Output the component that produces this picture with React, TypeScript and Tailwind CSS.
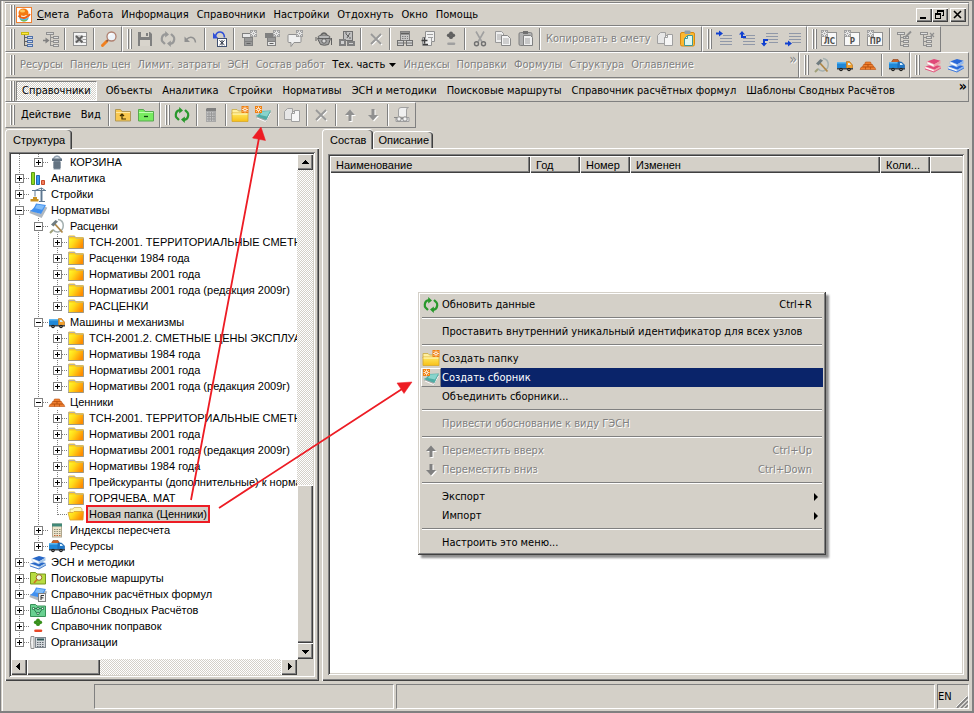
import React from "react";

type Kids = { children?: React.ReactNode };

const RAISED =
  "bg-[#d4d0c8] shadow-[inset_1px_1px_#ffffff,inset_-1px_-1px_#404040,inset_-2px_-2px_#808080]";
const SUNKEN =
  "p-0.5 shadow-[inset_1px_1px_#808080,inset_-1px_-1px_#ffffff,inset_2px_2px_#404040,inset_-2px_-2px_#d4d0c8]";
const DITHER =
  "bg-[conic-gradient(#ffffff_25%,#d4d0c8_0_50%,#ffffff_0_75%,#d4d0c8_0)] bg-[length:2px_2px]";
const DISABLED = "text-[#808080] [text-shadow:1px_1px_#ffffff]";
const CLASSIC = "font-['Liberation_Sans',sans-serif]";

/* ---------- icons ---------- */

function Svg({ children }: Kids) {
  return (
    <svg width="16" height="16" viewBox="0 0 16 16" fill="none" className="block shrink-0 overflow-visible" aria-hidden="true">
      {children}
    </svg>
  );
}

function Spark({ x, y, color = "#f08010" }: { x: number; y: number; color?: string }) {
  return (
    <g transform={`translate(${x} ${y})`}>
      <rect width="7" height="7" fill={color} />
      <path d="M3.5 .5v6M.5 3.5h6M1.3 1.3l4.4 4.4M5.7 1.3L1.3 5.7" stroke="#fff" strokeWidth=".8" />
      <circle cx="3.5" cy="3.5" r="1.2" fill={color} stroke="#fff" strokeWidth=".7" />
    </g>
  );
}

const Logo = () => (
  <Svg>
    <rect x=".5" y=".5" width="15" height="15" fill="#fff" stroke="#f08030" />
    <path d="M3 10q5 3 10 0q-1 4.500-5 4.500T3 10z" fill="#58b8e0" />
    <path d="M4 12q4 2.500 8 0q-1.500 2.500-4 2.500T4 12z" fill="#80c040" />
    <ellipse cx="7.500" cy="6" rx="5" ry="4.500" fill="#f47a10" />
    <ellipse cx="6.500" cy="4" rx="2.600" ry="1.600" fill="#ffc860" />
    <path d="M2.500 8.500c3 3.500 8 3.500 11.500-1.500" stroke="#f06010" strokeWidth="2" />
    <path d="M5 9q3 1.200 5.500-.5" stroke="#fff" />
  </Svg>
);

const TreeYellow = () => (
  <Svg>
    <g shapeRendering="crispEdges">
      <path d="M4.500 4v11M4.500 6.500h3M4.500 10.500h3M4.500 14.500h3" stroke="#606060" />
      <rect x="1.500" y="1.500" width="7" height="2" fill="#ffe840" stroke="#c8b810" />
      <rect x="7.500" y="5.500" width="5" height="2" fill="#c8daf4" stroke="#5070a8" />
      <rect x="7.500" y="9.500" width="5" height="2" fill="#c8daf4" stroke="#5070a8" />
      <rect x="7.500" y="13.500" width="5" height="2" fill="#c8daf4" stroke="#5070a8" />
    </g>
  </Svg>
);

const TreeGray = () => (
  <Svg>
    <g shapeRendering="crispEdges" stroke="#909090">
      <path d="M7.500 4v11M7.500 6.500h3M7.500 10.500h3M7.500 14.500h3" />
      <rect x="3.500" y="1.500" width="7" height="2" fill="#d8d8d8" />
      <rect x="10.500" y="5.500" width="5" height="2" fill="#e0e0e0" />
      <rect x="10.500" y="9.500" width="5" height="2" fill="#e0e0e0" />
      <rect x="10.500" y="13.500" width="5" height="2" fill="#e0e0e0" />
    </g>
    <path d="M0 9.500h3" stroke="#808080" strokeWidth="1.500" />
    <path d="M2.500 6.500l4 3-4 3z" fill="#808080" />
  </Svg>
);

const Excel = () => (
  <Svg>
    <g shapeRendering="crispEdges">
      <rect x="1.500" y="1.500" width="13" height="13" fill="#f4f4f4" stroke="#909090" />
      <path d="M11 5.500h3M11 8.500h3M11 11.500h3" stroke="#a0a0a0" />
      <rect x="3" y="4" width="8" height="8" fill="#d0d0d0" />
    </g>
    <path d="M4 5l6.500 6.500M10.500 5L4 11.500" stroke="#606060" strokeWidth="2" />
  </Svg>
);

const Magnifier = () => (
  <Svg>
    <path d="M6 10L1.500 14.500" stroke="#f08020" strokeWidth="3" strokeLinecap="round" />
    <path d="M8 8L5.500 10.500" stroke="#805848" strokeWidth="1.500" />
    <circle cx="10.500" cy="5.500" r="4.500" fill="#eef4fa" stroke="#b08070" strokeWidth="1.300" />
    <path d="M8 5c0-1.500 1.500-2.500 3-2" stroke="#fff" strokeWidth="1.200" />
  </Svg>
);

const Save = () => (
  <Svg>
    <path d="M1 1h12l2 2v12H1z" fill="#808080" />
    <path d="M4 1h8v5H4zM3 9h10v6H3z" fill="#d8d4cc" />
    <path d="M9 2h2v3H9z" fill="#808080" />
  </Svg>
);

function Refresh({ color }: { color: string }) {
  const half = (
    <g>
      <path d="M5 13L2.500 10.500Q1.600 9.500 1.800 7.500 2.300 3.500 6 3.200" stroke={color} strokeWidth="2.200" />
      <path d="M5.200 0L9 3.400 5.200 6.500z" fill={color} />
    </g>
  );
  return (
    <Svg>
      {half}
      <g transform="rotate(180 8 8)">{half}</g>
    </Svg>
  );
}

const Undo = () => (
  <Svg>
    <path d="M3.500 8.500C7 4.500 12 6 12.500 11.500" stroke="#909090" strokeWidth="1.500" />
    <path d="M1.500 5.500v5.500H7z" fill="#909090" />
  </Svg>
);

const Recalc = () => (
  <Svg>
    <path d="M3.500 5C5-.5 12-.5 12.500 6.500" stroke="#3050d8" strokeWidth="1.600" />
    <path d="M1 1.500v6h5.500z" fill="#3050d8" />
    <rect x="5.500" y="7.500" width="9" height="8" fill="#fff" stroke="#405070" />
    <path d="M7.500 9.500l5 4.500M12.500 9.500l-5 4.500M10 9v5.500" stroke="#303848" />
  </Svg>
);

function DrawerNew({ plus }: { plus?: boolean }) {
  return (
    <Svg>
      <rect x="1.500" y="2.500" width="10" height="4" fill={plus ? "#e8e8e8" : "#808080"} stroke="#808080" />
      <rect x="3.500" y="6.500" width="8" height="4" fill="#989898" stroke="#808080" />
      <rect x="3.500" y="10.500" width="8" height="4" fill={plus ? "#989898" : "#e8e8e8"} stroke="#808080" />
      <path d="M5.500 12.500h4" stroke="#606060" />
      <Spark x={9} y={-1} color="#a0a0a0" />
    </Svg>
  );
}

const Comment = () => (
  <Svg>
    <path d="M2 3.500h11q1 0 1 1v6q0 1-1 1H7l-3 4v-4H2q-1 0-1-1v-6q0-1 1-1z" fill="#f0f0f0" stroke="#909090" />
    <Spark x={9} y={-1} color="#a0a0a0" />
  </Svg>
);

const Pot = () => (
  <Svg>
    <path d="M5 4q3-4 6 0" stroke="#606060" strokeWidth="1.500" />
    <ellipse cx="8" cy="6" rx="6" ry="2" fill="#b8b8b8" stroke="#606060" />
    <path d="M1.500 7.500h13l-2 6q-4 1.500-8 0z" fill="#a0a0a0" stroke="#606060" />
    <circle cx="8" cy="10" r="2.200" fill="#d8d8d8" stroke="#606060" />
    <path d="M15.500 7v7M0 6v4" stroke="#606060" />
  </Svg>
);

const Building = () => (
  <Svg>
    <rect x="4.500" y=".5" width="9" height="9" fill="#c0c0c0" stroke="#707070" />
    <path d="M7 3l3 3M11 2L8 7M6 2h2M10 7h2" stroke="#606060" />
    <path d="M0 8h7v7H0zM8 10h8v5H8z" fill="#808080" />
    <path d="M2 10h3v3H2zM10 12h4v1h-4z" fill="#d0d0d0" />
  </Svg>
);

const Cross = () => (
  <Svg>
    <path d="M3 3l10 10M13 3L3 13" stroke="#fff" strokeWidth="1.500" transform="translate(1 1)" />
    <path d="M3 3l10 10M13 3L3 13" stroke="#989898" strokeWidth="1.800" />
  </Svg>
);

const CalcStack = () => (
  <Svg>
    <rect x="3.500" y=".5" width="9" height="9" fill="#c8c8c8" stroke="#808080" />
    <path d="M4 2.500h8" stroke="#606060" strokeWidth="2" />
    <path d="M5 5.500h6M5 7.500h6" stroke="#808080" strokeDasharray="1.500 1" />
    <rect x=".5" y="9.500" width="6" height="5" fill="#d0d0d0" stroke="#707070" />
    <rect x="9.500" y="9.500" width="6" height="5" fill="#d0d0d0" stroke="#707070" />
    <path d="M1 12h5M10 12h5M6 12h4" stroke="#707070" />
  </Svg>
);

const DocPlus = () => (
  <Svg>
    <path d="M5.500.5h9v10h-3v4h-9v-8h3z" fill="#f0f0f0" stroke="#909090" />
    <path d="M7 3.500h6M8 6.500h5M11.500 10V6" stroke="#a0a0a0" />
    <path d="M1.500 9.500h6M4.500 6.500v6M3 13.500h5" stroke="#404040" strokeWidth="1.600" />
  </Svg>
);

function PlusMinus({ a, b }: { a: string; b: string }) {
  return (
    <Svg>
      <g fill={a}>
        <circle cx="8" cy="2.300" r="1.900" />
        <circle cx="5.800" cy="4.300" r="1.900" />
        <circle cx="10.200" cy="4.300" r="1.900" />
        <circle cx="8" cy="6.200" r="1.900" />
      </g>
      <path d="M5.500 12.800h5.500" stroke={b} strokeWidth="2.600" strokeLinecap="round" />
    </Svg>
  );
}

const Scissors = () => (
  <Svg>
    <path d="M4 .5L10 11M12 .5L6 11" stroke="#a0a0a0" strokeWidth="1.600" />
    <circle cx="4.500" cy="12.800" r="2" stroke="#707070" strokeWidth="1.400" />
    <circle cx="11.500" cy="12.800" r="2" stroke="#707070" strokeWidth="1.400" />
  </Svg>
);

const Copy = () => (
  <Svg>
    <path d="M.5.5h6l2 2v9h-8z" fill="#eee" stroke="#989898" />
    <path d="M2 4h5M2 6h5M2 8h5" stroke="#a8a8a8" />
    <path d="M6.500 4.500h6l3 3v7h-9z" fill="#f4f4f4" stroke="#888" />
    <path d="M8 8h6M8 10h6M8 12h6" stroke="#a8a8a8" />
  </Svg>
);

const CopyPlain = () => (
  <Svg>
    <path d="M.5 4.500l3-3h5v11h-8z" fill="#e6e6e6" stroke="#a0a0a0" />
    <path d="M7.500 6.500l3-3h5v11h-8z" fill="#f6f6f6" stroke="#a0a0a0" />
    <path d="M7.500 6.500h3v-3" stroke="#a0a0a0" />
  </Svg>
);

const PasteGray = () => (
  <Svg>
    <rect x="1" y="1.500" width="13" height="13" rx="1.500" fill="#b0b0b0" stroke="#808080" />
    <rect x="5" y="0" width="5" height="3" fill="#707070" />
    <path d="M5.500 4.500h7l2 2v8h-9z" fill="#eee" stroke="#808080" />
    <path d="M7 8h5M7 10h5M7 12h5" stroke="#a0a0a0" />
  </Svg>
);

const PasteColor = () => (
  <Svg>
    <rect x=".5" y="1.500" width="14" height="13.500" rx="1.500" fill="#fbb830" stroke="#d88a10" />
    <rect x="4.500" y="-.5" width="6" height="3.500" rx="1" fill="#90a0a8" />
    <path d="M4.500 7.500l3-3h5v10h-8z" fill="#e0f8f2" stroke="#409898" />
    <path d="M4.500 7.500h3v-3" stroke="#409898" />
  </Svg>
);

function Lines({ up, left }: { up?: boolean; left?: boolean }) {
  const y = up ? [4.5, 7.5, 10.5, 13.5] : [2.5, 5.5, 8.5, 11.5];
  return (
    <Svg>
      <g stroke="#9098a8" shapeRendering="crispEdges">
        {y.map((v, i) => {
          const near = up ? i === 0 : i === 3;
          return <path key={v} d={near ? `M7 ${v}h9` : `M4 ${v}h12`} />;
        })}
      </g>
      <g fill="#1040d0">
        {left && up && <path d="M0 1.500h3V-.5L7 2.500 3 5.500V3.500H0z" />}
        {!left && up && <path d="M2 7V3.500H0L3 0l3 3.500H4V5h3v2z" />}
        {!left && !up && <path d="M7 8v2H4v2h2L3 15.500 0 12h2V8z" transform="translate(-1 0)" />}
        {left && !up && <path d="M0 11.500h3v-2l4 3-4 3v-2H0z" />}
      </g>
    </Svg>
  );
}

function Lettered({ text }: { text: string }) {
  return (
    <Svg>
      <rect x=".5" y="1.500" width="15" height="13" fill="#f8f8f8" stroke="#909090" />
      <text x="8.500" y="13" fontSize="8" fontWeight="700" textAnchor="middle" fill="#505050" fontFamily="DejaVu Sans Condensed, sans-serif">
        {text}
      </text>
      <Spark x={0} y={-1} color="#a0a0a0" />
    </Svg>
  );
}

function TreeMini({ cross }: { cross?: boolean }) {
  return (
    <Svg>
      <g shapeRendering="crispEdges" stroke="#909090">
        <path d="M4.500 4v11M4.500 6.500h3M4.500 10.500h3M4.500 14.500h3" />
        <rect x="1.500" y="1.500" width="7" height="2" fill="#e0e0e0" />
        <rect x="7.500" y="5.500" width="5" height="2" fill="#e0e0e0" />
        <rect x="7.500" y="9.500" width="5" height="2" fill="#e0e0e0" />
        <rect x="7.500" y="13.500" width="5" height="2" fill="#e0e0e0" />
      </g>
      {cross ? (
        <path d="M11 2l4 4M15 2l-4 4" stroke="#909090" strokeWidth="1.200" />
      ) : (
        <path d="M9 6.500l6-6" stroke="#909090" strokeWidth="2" />
      )}
    </Svg>
  );
}

const Hammer = () => (
  <Svg>
    <path d="M9 1.500c7 1 7 11 0 12.500-2.500.3-4-1-5-2.500" stroke="#a4b0b0" strokeWidth="1.500" />
    <path d="M4 12L1 15" stroke="#a0a078" strokeWidth="2" />
    <path d="M5 5l8.500 9.500" stroke="#b08848" strokeWidth="1.800" />
    <path d="M2 6.500L6.500 2l2.500 1.500-4.500 5z" fill="#707c80" />
  </Svg>
);

function Truck({ loaded }: { loaded?: boolean }) {
  return (
    <Svg>
      {loaded && <path d="M2 6l2-3.500h5L11 6z" fill="#c86028" stroke="#904010" strokeWidth=".6" />}
      <path d="M0 5h9.500v6H0z" fill="#2088d8" />
      <path d="M0 5h9.500v1.500H0z" fill="#60b8f0" />
      {loaded ? (
        <path d="M9 5h3.500L15.500 8v4H9z" fill="#2078c8" stroke="#1858a0" strokeWidth=".6" />
      ) : (
        <path d="M9.500 4.500h3L15.500 8v4h-6z" fill="#f0a030" stroke="#b06810" strokeWidth=".6" />
      )}
      <path d="M11 6h1.500l1.500 2h-3z" fill="#d8f0ff" />
      <path d="M0 11h16v1.500H0z" fill="#404850" />
      <circle cx="4" cy="12.500" r="1.800" fill="#202020" />
      <circle cx="12" cy="12.500" r="1.800" fill="#202020" />
      <path d="M4 12.500h.01M12 12.500h.01" stroke="#ccc" strokeWidth="1.200" strokeLinecap="round" />
    </Svg>
  );
}

const Bricks = () => (
  <Svg>
    <g fill="#f08030" stroke="#b85010" strokeWidth=".6">
      <path d="M5.500 5h5l1 2.500h-7zM3.500 7.500H8v2.500H2.500zM8 7.500h4.500l1.200 2.500H8zM1.300 10h4.200v2.500H0zM5.500 10h5v2.500h-5zM10.500 10h4l1.300 2.500h-5.300z" />
    </g>
  </Svg>
);

function Books({ top, page }: { top: string; page: string }) {
  return (
    <Svg>
      <path d="M0 9.500l7-2 9 1.500-7 4z" fill={top} />
      <path d="M0 9.500l9 3.300v2.200L0 11.500z" fill="#fff" stroke={page} strokeWidth=".6" />
      <path d="M9 12.800L16 9v2l-7 4z" fill={page} />
      <path d="M0 12l9 3 7-4" stroke={top} strokeWidth=".8" />
      <path d="M2 4.500l7-2.500 6.500 1.800L9 7.500z" fill={top} />
      <path d="M2 4.500l7 3v2.500l-7-3z" fill="#fff" stroke={page} strokeWidth=".6" />
      <path d="M9 7.500l6.500-3.700V6.500L9 10z" fill={page} />
    </Svg>
  );
}

function FolderTool({ kind }: { kind: "up" | "minus" }) {
  const g = kind === "minus";
  return (
    <Svg>
      <path d="M.5 2.500h5l1.500 2h8.500v9.500H.5z" fill={g ? "#78ec60" : "#f8c850"} stroke={g ? "#58a850" : "#b09858"} />
      <path d="M1 5.500h14" stroke={g ? "#c0ffb0" : "#ffe8a0"} />
      {g ? (
        <path d="M6 9.500h4" stroke="#104010" strokeWidth="1.300" />
      ) : (
        <path d="M7 7v5h4M5 9l2-2 2 2" stroke="#403000" strokeWidth="1.200" />
      )}
    </Svg>
  );
}

const Calculator = () => (
  <Svg>
    <path d="M4 1h9v3H3V2z" fill="#808080" />
    <rect x="3.500" y="4.500" width="9" height="10" fill="#c4c4c4" stroke="#a8a8a8" />
    <path d="M4 7h8M4 9.500h8M4 12h8M6 5v9M8.500 5v9M11 5v9" stroke="#989898" />
  </Svg>
);

const FolderNew = () => (
  <Svg>
    <path d="M0 2.500h5l1.500 1.500H15v3H0z" fill="#fff0a0" stroke="#c8a840" strokeWidth=".8" />
    <path d="M0 6h16v8.500H0z" fill="url(#folderFlat)" stroke="#d8a828" strokeWidth=".8" />
    <path d="M.5 7h15" stroke="#fff6c0" strokeWidth="1.200" />
    <Spark x={9.5} y={-1} />
  </Svg>
);

const BookNew = () => (
  <Svg>
    <path d="M1 10.500l10 4.500 5-9-1.500-2z" fill="#a8a8a8" />
    <path d="M2 11l8.500 3.500L15.500 6" stroke="#fff" strokeWidth="1" />
    <path d="M6 4l10-.5-4.500 9.500L.5 9q4-1 5.500-5z" fill="#50aca4" />
    <path d="M7 4.500l8-.5-3 5.500-7-1.500z" fill="#88d4cc" />
    <Spark x={0} y={-1} />
  </Svg>
);

function Arrow({ down, color }: { down?: boolean; color: string }) {
  const d = down ? "M6.500 2h3v6h3.500L8 13.500 3 8h3.500z" : "M6.500 14h3V8h3.500L8 2.500 3 8h3.500z";
  return (
    <Svg>
      <path d={d} fill="#fff" transform="translate(1 1)" />
      <path d={d} fill={color} />
    </Svg>
  );
}

const Glasses = () => (
  <Svg>
    <path d="M4.500 9V3q0-2.500 2.500-2.500h7.500q-2 0-2 2.500v7" fill="#f0f0f0" stroke="#a0a0a0" />
    <path d="M2 14.500h13v-4H2z" fill="#e4e4e4" stroke="#a0a0a0" />
    <circle cx="5" cy="12" r="2.200" fill="#f4f4f4" stroke="#888" />
    <circle cx="11" cy="12" r="2.200" fill="#f4f4f4" stroke="#888" />
    <path d="M0 10.500h3M7 11.500h2" stroke="#888" />
  </Svg>
);

const Folder = () => (
  <Svg>
    <path d="M0 2.500L1 1.500h5.500l1 1.500H15.500v11H0z" fill="#f8c820" />
    <path d="M0 4.500h16v10H0z" fill="url(#folderFill)" />
    <path d="M.5 14V2.500h6.500l1 1.500h7.500" stroke="#b8b0a0" />
    <path d="M0 14.500h15.500v-10" stroke="#a09880" />
  </Svg>
);

const FolderOpen = () => (
  <Svg>
    <path d="M2 3h3l1-1.500h7l1 1.500v7H2z" fill="#fff8b0" stroke="#d0b860" strokeWidth=".8" />
    <path d="M0 6.500h5l1-1h9.500L15 14H2z" fill="url(#folderFill)" stroke="#d8a030" strokeWidth=".8" />
  </Svg>
);

const Bin = () => (
  <Svg>
    <path d="M4 5q4-6 8 0" fill="#d8e0e8" stroke="#90a0b0" strokeWidth="1.300" />
    <path d="M3 4.500h10V7H3z" fill="#607080" />
    <path d="M4.500 7h7v8.500h-7z" fill="#8898a8" />
    <path d="M4 9h8M4 11h8M4 13h8M6 7v8M8 7v8M10 7v8" stroke="#506070" strokeWidth=".8" />
  </Svg>
);

const Bars = () => (
  <Svg>
    <path d="M1.500 2.500h3v12h-3z" fill="#90d820" stroke="#589818" />
    <path d="M6.500 5.500h3v9h-3z" fill="#3898f0" stroke="#2068b8" />
    <path d="M11.500 10.500h3v4h-3z" fill="#f08060" stroke="#c84828" />
  </Svg>
);

const Crane = () => (
  <Svg>
    <path d="M2 4.500h14M11.500 2v13M5 4.500v6M9 15.500h6M11.500 2l4 2.500M11.500 2L5 4.500" stroke="#607890" />
    <path d="M10.500 5v10M12.500 5v10" stroke="#8098b0" strokeWidth=".6" />
    <path d="M3 11h4v2h1.500v2.500h-8V13H3z" fill="#c89020" />
  </Svg>
);

function BlueBook({ letter }: { letter?: boolean }) {
  return (
    <Svg>
      <path d="M0 9.500l11 4.500 5-9" stroke="#b0b8c0" strokeWidth="3" />
      <path d="M6 1.500L16 3l-5 9L0 9q4-2 6-7.500z" fill="#4090f0" />
      <path d="M7 2.500l7.500 1.200-2.500 4-7-1.500z" fill="#80bcf8" />
      {letter && (
        <g>
          <rect x="8.500" y="7.500" width="7" height="8" fill="#f4f4f4" stroke="#808080" />
          <path d="M11 14v-4.500h3M11 11.800h2.500" stroke="#303030" />
        </g>
      )}
    </Svg>
  );
}

const CalcColor = () => (
  <Svg>
    <rect x="3.500" y="2" width="9" height="13" fill="#ece4cc" stroke="#b0a890" />
    <path d="M3 3h10" stroke="#408878" strokeWidth="3" />
    <path d="M5 7.500h7M5 9.500h7M5 11.500h7" stroke="#909078" strokeDasharray="1.500 1" />
    <path d="M5 13.500h7" stroke="#c06030" strokeDasharray="1.500 1" />
  </Svg>
);

const FolderSearch = () => (
  <Svg>
    <path d="M.5 14V2.500h5l1.500 1.500h8.500v10z" fill="#b8dc40" stroke="#789820" />
    <circle cx="9" cy="7.500" r="2.800" fill="#f4fce0" stroke="#a06830" />
    <path d="M7 9.500L4 13" stroke="#d07020" strokeWidth="1.600" />
  </Svg>
);

const FolderScheme = () => (
  <Svg>
    <path d="M.5 14.500V2.500h5l1.500 1.500h8.500v10.500z" fill="#68d090" stroke="#389058" />
    <path d="M4 7.500l3 4M12 7.500l-3 4M4 6.500h8" stroke="#206840" strokeWidth=".8" />
    <path d="M2.500 5.500h2v2h-2zM7 5.500h2v2H7zM11.500 5.500h2v2h-2zM7 10.500h2v2H7z" fill="#e8fff0" stroke="#206840" strokeWidth=".7" />
  </Svg>
);

const Phone = () => (
  <Svg>
    <path d="M1 2.500h3v12H1q-1-6 0-12z" fill="#f0f0f0" stroke="#909090" />
    <rect x="5.500" y="3.500" width="10" height="10" fill="#d4d8dc" stroke="#808890" />
    <path d="M7 5.500h7" stroke="#305858" strokeWidth="2" />
    <path d="M7 8.500h7M7 10.500h7M7 12.500h7" stroke="#606870" strokeDasharray="1.500 1" />
  </Svg>
);

/* ---------- toolbar parts ---------- */

function Bar({ children, grow }: Kids & { grow?: boolean }) {
  return (
    <div
      className={`flex min-w-0 items-center border border-t-white border-r-[#808080] border-b-[#808080] border-l-white pr-px pl-1 ${grow ? "flex-1" : ""}`}
    >
      <div className="mr-px flex h-5 shrink-0 gap-px">
        <i className="w-0.5 border-l border-white bg-[#808080]" />
        <i className="w-0.5 border-l border-white bg-[#808080]" />
      </div>
      {children}
    </div>
  );
}

function Tool({ label, children }: Kids & { label: string }) {
  return (
    <button type="button" aria-label={label} className="flex h-[22px] w-[23px] shrink-0 items-center justify-center">
      {children}
    </button>
  );
}

const Sep = () => <i className="mx-0.5 h-[22px] w-0.5 shrink-0 border-r border-l border-r-white border-l-[#808080]" />;

function TextTool({ children, className = "px-1" }: Kids & { className?: string }) {
  return (
    <button type="button" className={`h-5 shrink-0 whitespace-nowrap ${className}`}>
      {children}
    </button>
  );
}

function ScrollButton({ d, label }: { d: string; label: string }) {
  return (
    <button type="button" aria-label={label} className={`flex size-4 shrink-0 items-center justify-center ${RAISED}`}>
      <svg width="8" height="8" viewBox="0 0 8 8" shapeRendering="crispEdges" aria-hidden="true">
        <path d={d} fill="#000" />
      </svg>
    </button>
  );
}

/* ---------- tree ---------- */

type Node = {
  label: string;
  icon: React.ReactNode;
  guides: string;
  state?: "+" | "-" | "";
  selected?: boolean;
};

/* guides: one character per column — "|" passes through, "t" branches, "l" ends the branch, "." is empty */
const folder = (label: string): Node => ({ label, icon: <Folder />, guides: "||t", state: "+" });

const NODES: Node[] = [
  { label: "КОРЗИНА", icon: <Bin />, guides: "|l", state: "+" },
  { label: "Аналитика", icon: <Bars />, guides: "t", state: "+" },
  { label: "Стройки", icon: <Crane />, guides: "t", state: "+" },
  { label: "Нормативы", icon: <BlueBook />, guides: "t", state: "-" },
  { label: "Расценки", icon: <Hammer />, guides: "|t", state: "-" },
  folder("ТСН-2001. ТЕРРИТОРИАЛЬНЫЕ СМЕТН"),
  folder("Расценки 1984 года"),
  folder("Нормативы 2001 года"),
  folder("Нормативы 2001 года (редакция 2009г)"),
  { ...folder("РАСЦЕНКИ"), guides: "||l" },
  { label: "Машины и механизмы", icon: <Truck />, guides: "|t", state: "-" },
  folder("ТСН-2001.2. СМЕТНЫЕ ЦЕНЫ ЭКСПЛУА"),
  folder("Нормативы 1984 года"),
  folder("Нормативы 2001 года"),
  { ...folder("Нормативы 2001 года (редакция 2009г)"), guides: "||l" },
  { label: "Ценники", icon: <Bricks />, guides: "|t", state: "-" },
  folder("ТСН-2001. ТЕРРИТОРИАЛЬНЫЕ СМЕТН"),
  folder("Нормативы 2001 года"),
  folder("Нормативы 2001 года (редакция 2009г)"),
  folder("Нормативы 1984 года"),
  folder("Прейскуранты (дополнительные) к норма"),
  folder("ГОРЯЧЕВА. МАТ"),
  { label: "Новая папка (Ценники)", icon: <FolderOpen />, guides: "||l", state: "", selected: true },
  { label: "Индексы пересчета", icon: <CalcColor />, guides: "|t", state: "+" },
  { label: "Ресурсы", icon: <Truck loaded />, guides: "|l", state: "+" },
  { label: "ЭСН и методики", icon: <Books top="#2868c8" page="#a8c8e8" />, guides: "t", state: "+" },
  { label: "Поисковые маршруты", icon: <FolderSearch />, guides: "t", state: "+" },
  { label: "Справочник расчётных формул", icon: <BlueBook letter />, guides: "t", state: "+" },
  { label: "Шаблоны Сводных Расчётов", icon: <FolderScheme />, guides: "t", state: "+" },
  { label: "Справочник поправок", icon: <PlusMinus a="#38901c" b="#e84828" />, guides: "t", state: "+" },
  { label: "Организации", icon: <Phone />, guides: "l", state: "+" },
];

function Guide({ kind, state }: { kind: string; state?: string }) {
  return (
    <svg width="19" height="16" viewBox="0 0 19 16" fill="none" shapeRendering="crispEdges" className="shrink-0" aria-hidden="true">
      {kind !== "." && (
        <path d={kind === "l" ? "M8.500 0v9" : "M8.500 0v16"} stroke="#808080" strokeDasharray="1 1" />
      )}
      {(kind === "t" || kind === "l") && <path d="M9 8.500h10" stroke="#808080" strokeDasharray="1 1" />}
      {state && (
        <g>
          <rect x="4.500" y="4.500" width="8" height="8" fill="#fff" stroke="#808080" />
          <path d={state === "+" ? "M6 8.500h5M8.500 6v5" : "M6 8.500h5"} stroke="#000" />
        </g>
      )}
    </svg>
  );
}

function Tree() {
  return (
    <ul role="tree" aria-label="Структура" className={`min-w-0 flex-1 overflow-hidden bg-white ${CLASSIC}`}>
      {NODES.map((n, i) => (
        <li key={i} role="treeitem" aria-selected={!!n.selected} className="flex h-4 items-center whitespace-nowrap">
          {n.guides.split("").map((g, k) => (
            <Guide key={k} kind={g} state={k === n.guides.length - 1 ? n.state : ""} />
          ))}
          {n.icon}
          <span
            className={
              n.selected
                ? "z-10 ml-0.5 h-[18px] border-2 border-[#ed1c24] bg-[#d4d0c8] px-px leading-[14px]"
                : "ml-[5px] leading-4"
            }
          >
            {n.label}
          </span>
        </li>
      ))}
    </ul>
  );
}

/* ---------- context menu ---------- */

type Entry = { label: string; icon?: React.ReactNode; keys?: string; off?: boolean; active?: boolean; sub?: boolean } | null;

const MENU: Entry[] = [
  { label: "Обновить данные", icon: <Refresh color="#28982c" />, keys: "Ctrl+R" },
  null,
  { label: "Проставить внутренний уникальный идентификатор для всех узлов" },
  null,
  { label: "Создать папку", icon: <FolderNew /> },
  { label: "Создать сборник", icon: <BookNew />, active: true },
  { label: "Объединить сборники..." },
  null,
  { label: "Привести обоснование к виду ГЭСН", off: true },
  null,
  { label: "Переместить вверх", icon: <Arrow color="#808080" />, keys: "Ctrl+Up", off: true },
  { label: "Переместить вниз", icon: <Arrow down color="#808080" />, keys: "Ctrl+Down", off: true },
  null,
  { label: "Экспорт", sub: true },
  { label: "Импорт", sub: true },
  null,
  { label: "Настроить это меню..." },
];

function ContextMenu() {
  return (
    <div
      role="menu"
      className="absolute top-[291px] left-[417px] z-20 w-[408px] bg-[#d4d0c8] p-[3px] shadow-[inset_-1px_-1px_#404040,inset_1px_1px_#d4d0c8,inset_-2px_-2px_#808080,inset_2px_2px_#ffffff,3px_3px_2px_#00000070]"
    >
      {MENU.map((m, i) =>
        m === null ? (
          <div key={i} role="separator" className="mx-px flex h-2 items-center">
            <i className="h-0.5 w-full border-t border-b border-t-[#808080] border-b-white" />
          </div>
        ) : (
          <button key={i} type="button" role="menuitem" disabled={m.off} className="flex h-[19px] w-full items-center text-left">
            <span
              className={`flex h-full w-5 shrink-0 items-center border pr-0.5 pl-px ${m.active ? "border-t-white border-r-[#808080] border-b-[#808080] border-l-white" : "border-transparent"}`}
            >
              {m.icon}
            </span>
            <span
              className={`flex h-full min-w-0 flex-1 items-center justify-between pl-px whitespace-nowrap ${m.active ? "bg-[#0a246a] text-white" : ""} ${m.off ? DISABLED : ""} ${m.sub ? "pr-1" : "pr-[11px]"}`}
            >
              <span>{m.label}</span>
              {m.keys && <span>{m.keys}</span>}
              {m.sub && (
                <svg width="6" height="8" viewBox="0 0 6 8" aria-hidden="true">
                  <path d="M1 0l4 4-4 4z" fill="#000" />
                </svg>
              )}
            </span>
          </button>
        ),
      )}
    </div>
  );
}

/* ---------- tabs ---------- */

function Tab({ active, children }: Kids & { active?: boolean }) {
  return (
    <button
      type="button"
      role="tab"
      aria-selected={!!active}
      className={`rounded-t-sm border-t border-l border-white bg-[#d4d0c8] whitespace-nowrap shadow-[inset_-1px_0_#404040,inset_-2px_0_#808080] ${active ? "z-10 -mb-px h-5 px-[7px]" : "h-[17px] px-1"}`}
    >
      {children}
    </button>
  );
}

const TOP_MENU = ["Работа", "Информация", "Справочники", "Настройки", "Отдохнуть", "Окно", "Помощь"];
const LINKS_A = ["Ресурсы", "Панель цен", "Лимит. затраты", "ЭСН", "Состав работ"];
const LINKS_B = ["Индексы", "Поправки", "Формулы", "Структура", "Оглавление"];
const SECTIONS = [
  "Объекты",
  "Аналитика",
  "Стройки",
  "Нормативы",
  "ЭСН и методики",
  "Поисковые маршруты",
  "Справочник расчётных формул",
  "Шаблоны Сводных Расчётов",
];

export default function App() {
  return (
    <div className="relative flex h-screen flex-col overflow-hidden border-t border-r-2 border-b-2 border-l border-[#808080] bg-[#d4d0c8] font-['DejaVu_Sans_Condensed','DejaVu_Sans',sans-serif] text-[11px] leading-4 text-black">
      <svg width="0" height="0" className="absolute" aria-hidden="true">
        <linearGradient id="folderFill" x1="0" y1="0" x2="1" y2=".4">
          <stop offset="0" stopColor="#ffff30" />
          <stop offset=".45" stopColor="#ffd818" />
          <stop offset="1" stopColor="#ff8c00" />
        </linearGradient>
        <linearGradient id="folderFlat" x1="0" y1="0" x2="0" y2="1">
          <stop offset="0" stopColor="#ffe860" />
          <stop offset="1" stopColor="#f8c018" />
        </linearGradient>
      </svg>

      <div className="ml-px flex min-h-0 flex-1 flex-col border-l border-white pt-px pr-[3px] pl-0.5">
        {/* main menu */}
        <nav className="flex h-6 shrink-0 border-t border-[#808080]">
          <Bar grow>
            <Logo />
            <TextTool className="pr-1 pl-[5px]">
              <u>С</u>мета
            </TextTool>
            {TOP_MENU.map((t) => (
              <TextTool key={t}>{t}</TextTool>
            ))}
            <div className="mr-px ml-auto flex">
              <button type="button" aria-label="Свернуть" className={`h-3.5 w-4 ${RAISED}`}>
                <svg width="16" height="14" aria-hidden="true">
                  <path d="M4 9h6v2H4z" fill="#000" />
                </svg>
              </button>
              <button type="button" aria-label="Восстановить" className={`h-3.5 w-4 ${RAISED}`}>
                <svg width="16" height="14" fill="none" stroke="#000" shapeRendering="crispEdges" aria-hidden="true">
                  <path d="M5.500 5V2.500h6v5H10M5 3h7M3.500 5.500h5v5h-5zM3 6h6" />
                </svg>
              </button>
              <button type="button" aria-label="Закрыть" className={`ml-0.5 h-3.5 w-4 ${RAISED}`}>
                <svg width="16" height="14" fill="none" stroke="#000" strokeWidth="1.600" aria-hidden="true">
                  <path d="M4 3l7 7M11 3l-7 7" />
                </svg>
              </button>
            </div>
          </Bar>
        </nav>

        {/* standard toolbar */}
        <div className="flex h-[26px] shrink-0">
          <Bar>
            <Tool label="Дерево"><TreeYellow /></Tool>
            <Tool label="Вставить в дерево"><TreeGray /></Tool>
            <Sep />
            <Tool label="Excel"><Excel /></Tool>
            <Sep />
            <Tool label="Поиск"><Magnifier /></Tool>
          </Bar>
          <Bar>
            <Tool label="Сохранить"><Save /></Tool>
            <Tool label="Обновить"><Refresh color="#989898" /></Tool>
            <Tool label="Отменить"><Undo /></Tool>
            <Sep />
            <Tool label="Пересчитать"><Recalc /></Tool>
            <Sep />
            <Tool label="Новый раздел"><DrawerNew plus /></Tool>
            <Tool label="Новый подраздел"><DrawerNew /></Tool>
            <Tool label="Комментарий"><Comment /></Tool>
            <i className="w-1.5 shrink-0" />
            <Tool label="Материалы"><Pot /></Tool>
            <Tool label="Здания"><Building /></Tool>
            <Sep />
            <Tool label="Удалить"><Cross /></Tool>
            <Sep />
            <Tool label="Калькуляция"><CalcStack /></Tool>
            <Tool label="Добавить документ"><DocPlus /></Tool>
            <Tool label="Поправка"><PlusMinus a="#606060" b="#a0a0a0" /></Tool>
            <Sep />
            <Tool label="Вырезать"><Scissors /></Tool>
            <Tool label="Копировать"><Copy /></Tool>
            <Tool label="Вставить"><PasteGray /></Tool>
            <Sep />
            <TextTool className={`px-[3px] ${DISABLED}`}>Копировать в смету</TextTool>
            <Tool label="Копии"><CopyPlain /></Tool>
            <Tool label="Буфер"><PasteColor /></Tool>
          </Bar>
          <Bar>
            <Tool label="Уровень вправо вверх"><Lines up left /></Tool>
            <Tool label="Уровень вверх"><Lines up /></Tool>
            <Tool label="Уровень вниз"><Lines /></Tool>
            <Tool label="Уровень вправо вниз"><Lines left /></Tool>
          </Bar>
          <Bar>
            <Tool label="Локальная смета"><Lettered text="ЛС" /></Tool>
            <Tool label="Раздел"><Lettered text="Р" /></Tool>
            <Tool label="Подраздел"><Lettered text="ПР" /></Tool>
            <Sep />
            <Tool label="Править структуру"><TreeMini /></Tool>
            <Tool label="Очистить структуру"><TreeMini cross /></Tool>
          </Bar>
        </div>

        {/* panels toolbar */}
        <div className="flex h-[26px] shrink-0">
          <Bar grow>
            {LINKS_A.map((t) => (
              <TextTool key={t} className={`pr-[3px] pl-1 ${DISABLED}`}>
                {t}
              </TextTool>
            ))}
            <TextTool className="flex items-center gap-1 pr-[3px] pl-1">
              Тех. часть
              <svg width="7" height="4" aria-hidden="true">
                <path d="M0 0h7L3.500 4z" fill="#000" />
              </svg>
            </TextTool>
            {LINKS_B.map((t) => (
              <TextTool key={t} className={`pr-[3px] pl-1 ${DISABLED}`}>
                {t}
              </TextTool>
            ))}
            <button type="button" className={`ml-auto self-start text-sm leading-3 ${DISABLED}`}>»</button>
          </Bar>
          <Bar>
            <Tool label="Расценки"><Hammer /></Tool>
            <Tool label="Машины"><Truck /></Tool>
            <Tool label="Материалы"><Bricks /></Tool>
            <Sep />
            <Tool label="Ресурсы"><Truck loaded /></Tool>
          </Bar>
          <Bar>
            <Tool label="Методики"><Books top="#e04878" page="#f0a0a8" /></Tool>
            <Tool label="ЭСН"><Books top="#2868d8" page="#90b8f0" /></Tool>
          </Bar>
        </div>

        {/* sections */}
        <nav className="mt-px flex h-[23px] shrink-0">
          <Bar grow>
            <button
              type="button"
              aria-pressed="true"
              className={`mr-1 h-5 shrink-0 border border-t-[#808080] border-r-white border-b-white border-l-[#808080] px-[5px] ${DITHER}`}
            >
              Справочники
            </button>
            {SECTIONS.map((t) => (
              <TextTool key={t} className="px-[5px]">
                {t}
              </TextTool>
            ))}
            <button type="button" className="ml-auto self-start text-sm leading-3 font-bold">»</button>
          </Bar>
        </nav>

        {/* actions */}
        <div className="flex h-[26px] shrink-0">
          <Bar>
            <TextTool className="px-[5px]">Действие</TextTool>
            <TextTool className="px-[5px]">Вид</TextTool>
            <Sep />
            <Tool label="На уровень выше"><FolderTool kind="up" /></Tool>
            <Tool label="Свернуть"><FolderTool kind="minus" /></Tool>
          </Bar>
          <Bar>
            <Tool label="Обновить данные"><Refresh color="#28982c" /></Tool>
            <Sep />
            <Tool label="Калькулятор"><Calculator /></Tool>
            <Sep />
            <Tool label="Создать папку"><FolderNew /></Tool>
            <Tool label="Создать сборник"><BookNew /></Tool>
            <Sep />
            <Tool label="Копировать"><CopyPlain /></Tool>
            <Sep />
            <Tool label="Удалить"><Cross /></Tool>
            <Sep />
            <Tool label="Переместить вверх"><Arrow color="#909090" /></Tool>
            <Tool label="Переместить вниз"><Arrow down color="#909090" /></Tool>
            <Sep />
            <Tool label="Просмотр"><Glasses /></Tool>
          </Bar>
        </div>

        {/* work area */}
        <main className="flex min-h-0 flex-1 gap-[3px]">
          <section className="flex w-[314px] shrink-0 flex-col">
            <div role="tablist" className={`flex h-5 shrink-0 items-end ${CLASSIC}`}>
              <Tab active>Структура</Tab>
            </div>
            <div className={`flex min-h-0 flex-1 p-1 ${RAISED}`}>
              <div className={`flex min-w-0 flex-1 flex-col ${SUNKEN}`}>
                <div className="flex min-h-0 flex-1">
                  <Tree />
                  <div className={`flex w-4 shrink-0 flex-col ${DITHER}`}>
                    <ScrollButton label="Вверх" d="M1 6h7v-1h-1v-1h-1v-1h-1v-1h-1v1h-1v1h-1v1h-1z" />
                    <i className="flex-[315]" />
                    <i className={`flex-[158] ${RAISED}`} />
                    <ScrollButton label="Вниз" d="M1 3h7v1h-1v1h-1v1h-1v1h-1v-1h-1v-1h-1v-1h-1z" />
                  </div>
                </div>
                <div className="flex h-4 shrink-0">
                  <div className={`flex flex-1 ${DITHER}`}>
                    <ScrollButton label="Влево" d="M5 0v7h-1v-1h-1v-1h-1v-1h-1v-1h1v-1h1v-1h1v-1z" />
                    <i className={`w-[73px] ${RAISED}`} />
                    <i className="flex-1" />
                    <ScrollButton label="Вправо" d="M3 0v7h1v-1h1v-1h1v-1h1v-1h-1v-1h-1v-1h-1v-1z" />
                  </div>
                  <i className="w-4 bg-[#d4d0c8]" />
                </div>
              </div>
            </div>
          </section>

          <section className="flex min-w-0 flex-1 flex-col">
            <div role="tablist" className={`flex h-5 shrink-0 items-end ${CLASSIC}`}>
              <Tab active>Состав</Tab>
              <Tab>Описание</Tab>
            </div>
            <div className={`flex min-h-0 flex-1 py-1.5 pr-[5px] pl-1.5 ${RAISED}`}>
              <div className={`min-w-0 flex-1 bg-white ${SUNKEN} ${CLASSIC}`}>
                <table className="w-full table-fixed border-collapse">
                  <thead>
                    <tr className="h-[17px] text-left">
                      {[
                        ["Наименование", "w-[200px]"],
                        ["Год", "w-[50px]"],
                        ["Номер", "w-[50px]"],
                        ["Изменен", "w-[250px]"],
                        ["Коли...", "w-[50px]"],
                      ].map(([t, w]) => (
                        <th key={t} scope="col" className={`${w} ${RAISED} overflow-hidden p-0 pl-1.5 font-normal whitespace-nowrap`}>
                          {t}
                        </th>
                      ))}
                      <td className="bg-[#d4d0c8] shadow-[inset_1px_1px_#ffffff,inset_0_-1px_#404040,inset_0_-2px_#808080]" />
                    </tr>
                  </thead>
                </table>
              </div>
            </div>
          </section>
        </main>

        {/* status bar */}
        <footer className="mt-[3px] mb-0.5 flex h-[25px] shrink-0 gap-0.5">
          <div className="w-[87px] shrink-0" />
          <div className="w-[300px] shrink-0 border border-t-[#808080] border-r-white border-b-white border-l-[#808080]" />
          <div className="flex-1 border border-t-[#808080] border-r-white border-b-white border-l-[#808080]" />
          <div className="flex w-8 shrink-0 items-center justify-between border border-t-[#808080] border-r-white border-b-white border-l-[#808080]">
            EN
            <svg width="12" height="12" className="-ml-1 shrink-0 self-end" aria-hidden="true">
              <path d="M1 12L12 1M5 12l7-7M9 12l3-3" stroke="#808080" strokeWidth="1.800" />
              <path d="M0 11L11 0M4 11.500l8-8M8 11.500l4-4" stroke="#fff" strokeWidth=".8" />
            </svg>
          </div>
        </footer>
      </div>

      <ContextMenu />

      {/* callout arrows */}
      <svg width="420" height="520" className="pointer-events-none absolute -top-px -left-px z-30" aria-hidden="true">
        <g stroke="#ed1c24" strokeWidth="1.800" fill="#ed1c24">
          <path d="M191 500L259 138M219 508L402 389" fill="none" />
          <path d="M261 127l4.500 13.500-13-2.500zM412 382l-8 11.500-7-10.500z" strokeWidth=".5" />
        </g>
      </svg>
    </div>
  );
}
